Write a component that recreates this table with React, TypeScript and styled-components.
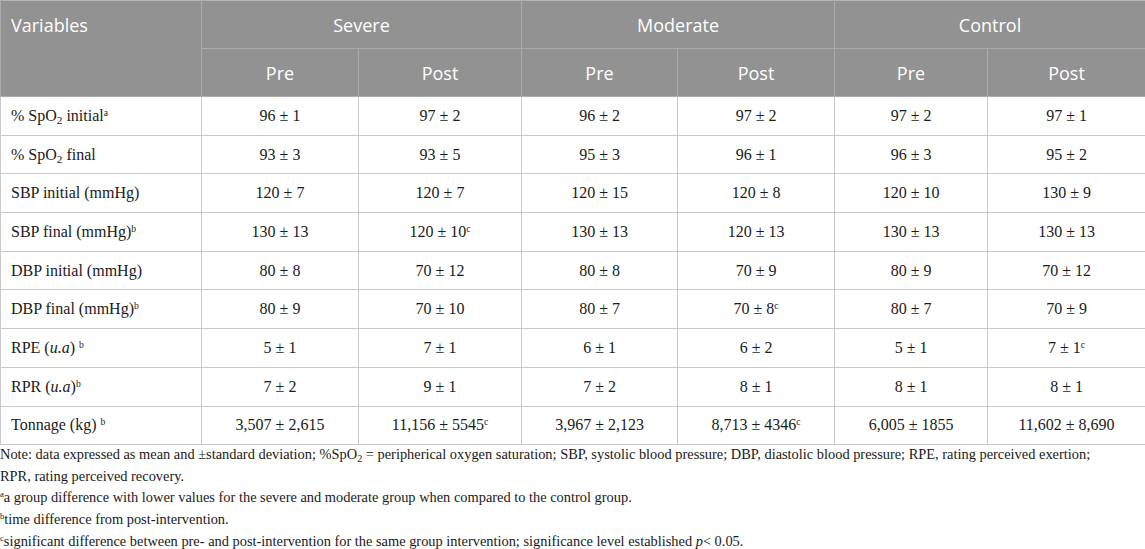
import styled, { createGlobalStyle } from "styled-components";
import { Fragment } from "react";

type Cell = React.ReactNode;

interface DataRow {
  label: Cell;
  values: Cell[];
}

const Sup = styled.sup`
  font-size: 0.6em;
  line-height: 0;
  vertical-align: 0.55em;
`;

const Sub = styled.sub`
  font-size: 0.7em;
  line-height: 0;
  vertical-align: -0.25em;
`;

const Em = styled.i`
  font-style: italic;
`;

const SpO2 = () => (
  <>
    SpO<Sub>2</Sub>
  </>
);

const val = (v: string, mark?: string) => (
  <>
    {v}
    {mark && <Sup>{mark}</Sup>}
  </>
);

const rows: DataRow[] = [
  {
    label: (
      <>
        % <SpO2 /> initial<Sup>a</Sup>
      </>
    ),
    values: ["96 ± 1", "97 ± 2", "96 ± 2", "97 ± 2", "97 ± 2", "97 ± 1"],
  },
  {
    label: (
      <>
        % <SpO2 /> final
      </>
    ),
    values: ["93 ± 3", "93 ± 5", "95 ± 3", "96 ± 1", "96 ± 3", "95 ± 2"],
  },
  {
    label: "SBP initial (mmHg)",
    values: ["120 ± 7", "120 ± 7", "120 ± 15", "120 ± 8", "120 ± 10", "130 ± 9"],
  },
  {
    label: (
      <>
        SBP final (mmHg)<Sup>b</Sup>
      </>
    ),
    values: [
      "130 ± 13",
      val("120 ± 10", "c"),
      "130 ± 13",
      "120 ± 13",
      "130 ± 13",
      "130 ± 13",
    ],
  },
  {
    label: "DBP initial (mmHg)",
    values: ["80 ± 8", "70 ± 12", "80 ± 8", "70 ± 9", "80 ± 9", "70 ± 12"],
  },
  {
    label: (
      <>
        DBP final (mmHg)<Sup>b</Sup>
      </>
    ),
    values: ["80 ± 9", "70 ± 10", "80 ± 7", val("70 ± 8", "c"), "80 ± 7", "70 ± 9"],
  },
  {
    label: (
      <>
        RPE (<Em>u.a</Em>) <Sup>b</Sup>
      </>
    ),
    values: ["5 ± 1", "7 ± 1", "6 ± 1", "6 ± 2", "5 ± 1", val("7 ± 1", "c")],
  },
  {
    label: (
      <>
        RPR (<Em>u.a</Em>)<Sup>b</Sup>
      </>
    ),
    values: ["7 ± 2", "9 ± 1", "7 ± 2", "8 ± 1", "8 ± 1", "8 ± 1"],
  },
  {
    label: (
      <>
        Tonnage (kg) <Sup>b</Sup>
      </>
    ),
    values: [
      "3,507 ± 2,615",
      val("11,156 ± 5545", "c"),
      "3,967 ± 2,123",
      val("8,713 ± 4346", "c"),
      "6,005 ± 1855",
      "11,602 ± 8,690",
    ],
  },
];

const colWidths = [201, 157, 163, 156, 157, 153, 158];
const groups = ["Severe", "Moderate", "Control"];

export default function App() {
  return (
    <>
      <GlobalStyle />
      <Page>
        <Table>
          <colgroup>
            {colWidths.map((w, i) => (
              <col key={i} style={{ width: w }} />
            ))}
          </colgroup>
          <thead>
            <HeadRow>
              <HeadCell rowSpan={2} $left>
                Variables
              </HeadCell>
              {groups.map((g) => (
                <HeadCell key={g} colSpan={2}>
                  {g}
                </HeadCell>
              ))}
            </HeadRow>
            <HeadRow>
              {groups.map((g) => (
                <Fragment key={g}>
                  <HeadCell>Pre</HeadCell>
                  <HeadCell>Post</HeadCell>
                </Fragment>
              ))}
            </HeadRow>
          </thead>
          <tbody>
            {rows.map((r, i) => (
              <Row key={i}>
                <Cell $left>{r.label}</Cell>
                {r.values.map((v, j) => (
                  <Cell key={j}>{v}</Cell>
                ))}
              </Row>
            ))}
          </tbody>
        </Table>
        <Notes>
          <Note>
            Note: data expressed as mean and ±standard deviation; %SpO
            <Sub>2</Sub> = peripherical oxygen saturation; SBP, systolic blood
            pressure; DBP, diastolic blood pressure; RPE, rating perceived
            exertion; RPR, rating perceived recovery.
          </Note>
          <Note>
            <Sup>a</Sup>a group difference with lower values for the severe and
            moderate group when compared to the control group.
          </Note>
          <Note>
            <Sup>b</Sup>time difference from post-intervention.
          </Note>
          <Note>
            <Sup>c</Sup>significant difference between pre- and
            post-intervention for the same group intervention; significance
            level established <Em>p</Em>&lt; 0.05.
          </Note>
        </Notes>
      </Page>
    </>
  );
}

const GlobalStyle = createGlobalStyle`
  html, body {
    margin: 0;
    padding: 0;
    background: #ffffff;
  }
`;

const Page = styled.div`
  width: 1145px;
  font-family: "Liberation Serif", "Times New Roman", serif;
  color: #1a1a1a;
`;

const Table = styled.table`
  width: 1145px;
  table-layout: fixed;
  border-collapse: collapse;
`;

const HeadRow = styled.tr`
  height: 48px;
`;

const HeadCell = styled.th<{ $left?: boolean }>`
  background: #929292;
  color: #ffffff;
  font-family: "Open Sans", "Noto Sans", sans-serif;
  font-weight: 400;
  font-size: 18px;
  text-align: ${(p) => (p.$left ? "left" : "center")};
  vertical-align: ${(p) => (p.$left ? "top" : "middle")};
  padding: ${(p) => (p.$left ? "12px 10px" : "0 8px")};
  border: 1px solid #ababab;
  border-top-color: #b4b4b4;
`;

const Row = styled.tr`
  height: 38.7px;
`;

const Cell = styled.td<{ $left?: boolean }>`
  font-size: 16px;
  text-align: ${(p) => (p.$left ? "left" : "center")};
  vertical-align: middle;
  padding: 0 10px;
  border: 1px solid #c9c9c9;
  white-space: nowrap;
`;

const Notes = styled.div`
  width: 1098px;
  margin-top: -1px;
`;

const Note = styled.p`
  margin: 0;
  font-size: 14.4px;
  line-height: 21.6px;
`;
